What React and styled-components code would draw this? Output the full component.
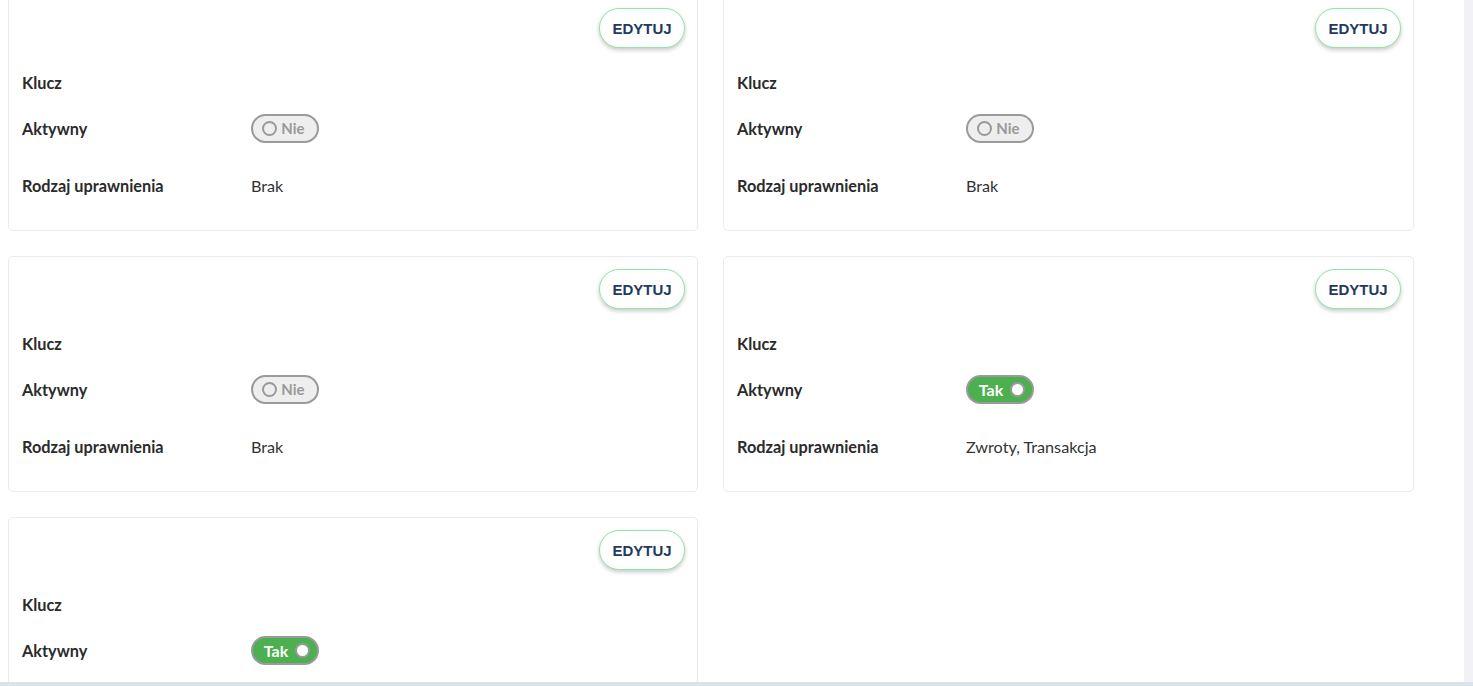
import React from "react";
import styled, { createGlobalStyle } from "styled-components";

const Global = createGlobalStyle`
  html, body { margin: 0; padding: 0; background: #fff; }
  body { font-family: Lato, "Noto Sans", sans-serif; }
  #root { height: 686px; overflow: hidden; }
`;

const Page = styled.div`
  height: 686px;
  display: flex;
  flex-direction: column;
  overflow: hidden;
`;

const Body = styled.div`
  flex: 1;
  display: flex;
  min-height: 0;
  overflow: hidden;
`;

const Main = styled.main`
  flex: 1;
  overflow: hidden;
  padding-left: 8px;
`;

const ScrollStrip = styled.div`
  width: 9px;
  background: #f1f1f6;
`;

const BottomBar = styled.div`
  height: 4px;
  background: #d7e4e9;
`;

const Grid = styled.div`
  display: grid;
  grid-template-columns: 690px 691px;
  column-gap: 25px;
  row-gap: 25px;
  margin-top: -5px;
`;

const Card = styled.section`
  box-sizing: border-box;
  height: 236px;
  border: 1px solid #ebebeb;
  border-radius: 5px;
  background: #fff;
  padding: 12px 12px 0 13px;
  display: flex;
  flex-direction: column;
`;

const CardHeader = styled.div`
  display: flex;
  justify-content: flex-end;
  height: 40px;
  margin-bottom: 11px;
`;

const EditButton = styled.button`
  box-sizing: border-box;
  width: 86px;
  height: 40px;
  border-radius: 20px;
  border: 1.5px solid #8fe6a8;
  background: #fff;
  box-shadow: 0 2px 4px rgba(0, 0, 0, 0.22);
  font-family: "Liberation Sans", Arial, sans-serif;
  font-weight: 700;
  font-size: 15px;
  color: #233a5e;
  cursor: pointer;
  padding: 0;
`;

const Row = styled.div`
  display: grid;
  grid-template-columns: 229px 1fr;
  align-items: center;
  height: ${(p) => p.$h}px;
  box-sizing: border-box;
`;

const Label = styled.span`
  font-family: Lato, sans-serif;
  font-weight: 700;
  font-size: 16.3px;
  color: #2b2b2b;
`;

const Value = styled.span`
  font-family: Lato, sans-serif;
  font-size: 16.2px;
  color: #333;
`;

const Toggle = styled.span`
  box-sizing: border-box;
  width: 68px;
  height: 29px;
  border-radius: 15px;
  border: 2px solid #9a9a9a;
  background: ${(p) => (p.$on ? "#4caf50" : "#eeeeee")};
  display: flex;
  align-items: center;
  flex-direction: ${(p) => (p.$on ? "row" : "row-reverse")};
  justify-content: center;
  gap: ${(p) => (p.$on ? 7 : 4)}px;
  padding: ${(p) => (p.$on ? "0 0 0 4px" : "0 3px 0 0")};
`;

const ToggleText = styled.span`
  font-family: Lato, sans-serif;
  font-weight: 700;
  font-size: ${(p) => (p.$on ? 16 : 15)}px;
  color: ${(p) => (p.$on ? "#fff" : "#9a9a9a")};
`;

const Knob = styled.span`
  box-sizing: border-box;
  width: 15px;
  height: 15px;
  border-radius: 50%;
  border: 2px solid #9a9a9a;
  background: ${(p) => (p.$on ? "#fff" : "transparent")};
`;

function Switch({ on }) {
  return (
    <Toggle $on={on}>
      <ToggleText $on={on}>{on ? "Tak" : "Nie"}</ToggleText>
      <Knob $on={on} />
    </Toggle>
  );
}

const cards = [
  { on: false, perm: "Brak" },
  { on: false, perm: "Brak" },
  { on: false, perm: "Brak" },
  { on: true, perm: "Zwroty, Transakcja" },
  { on: true, perm: "" },
];

export default function App() {
  return (
    <Page>
      <Global />
      <Body>
        <Main>
          <Grid>
            {cards.map((c, i) => (
              <Card key={i}>
                <CardHeader>
                  <EditButton>EDYTUJ</EditButton>
                </CardHeader>
                <Row $h={46}>
                  <Label>Klucz</Label>
                  <span />
                </Row>
                <Row $h={46}>
                  <Label>Aktywny</Label>
                  <div>
                    <Switch on={c.on} />
                  </div>
                </Row>
                <Row $h={69}>
                  <Label>Rodzaj uprawnienia</Label>
                  <Value>{c.perm}</Value>
                </Row>
              </Card>
            ))}
          </Grid>
        </Main>
        <ScrollStrip />
      </Body>
      <BottomBar />
    </Page>
  );
}
